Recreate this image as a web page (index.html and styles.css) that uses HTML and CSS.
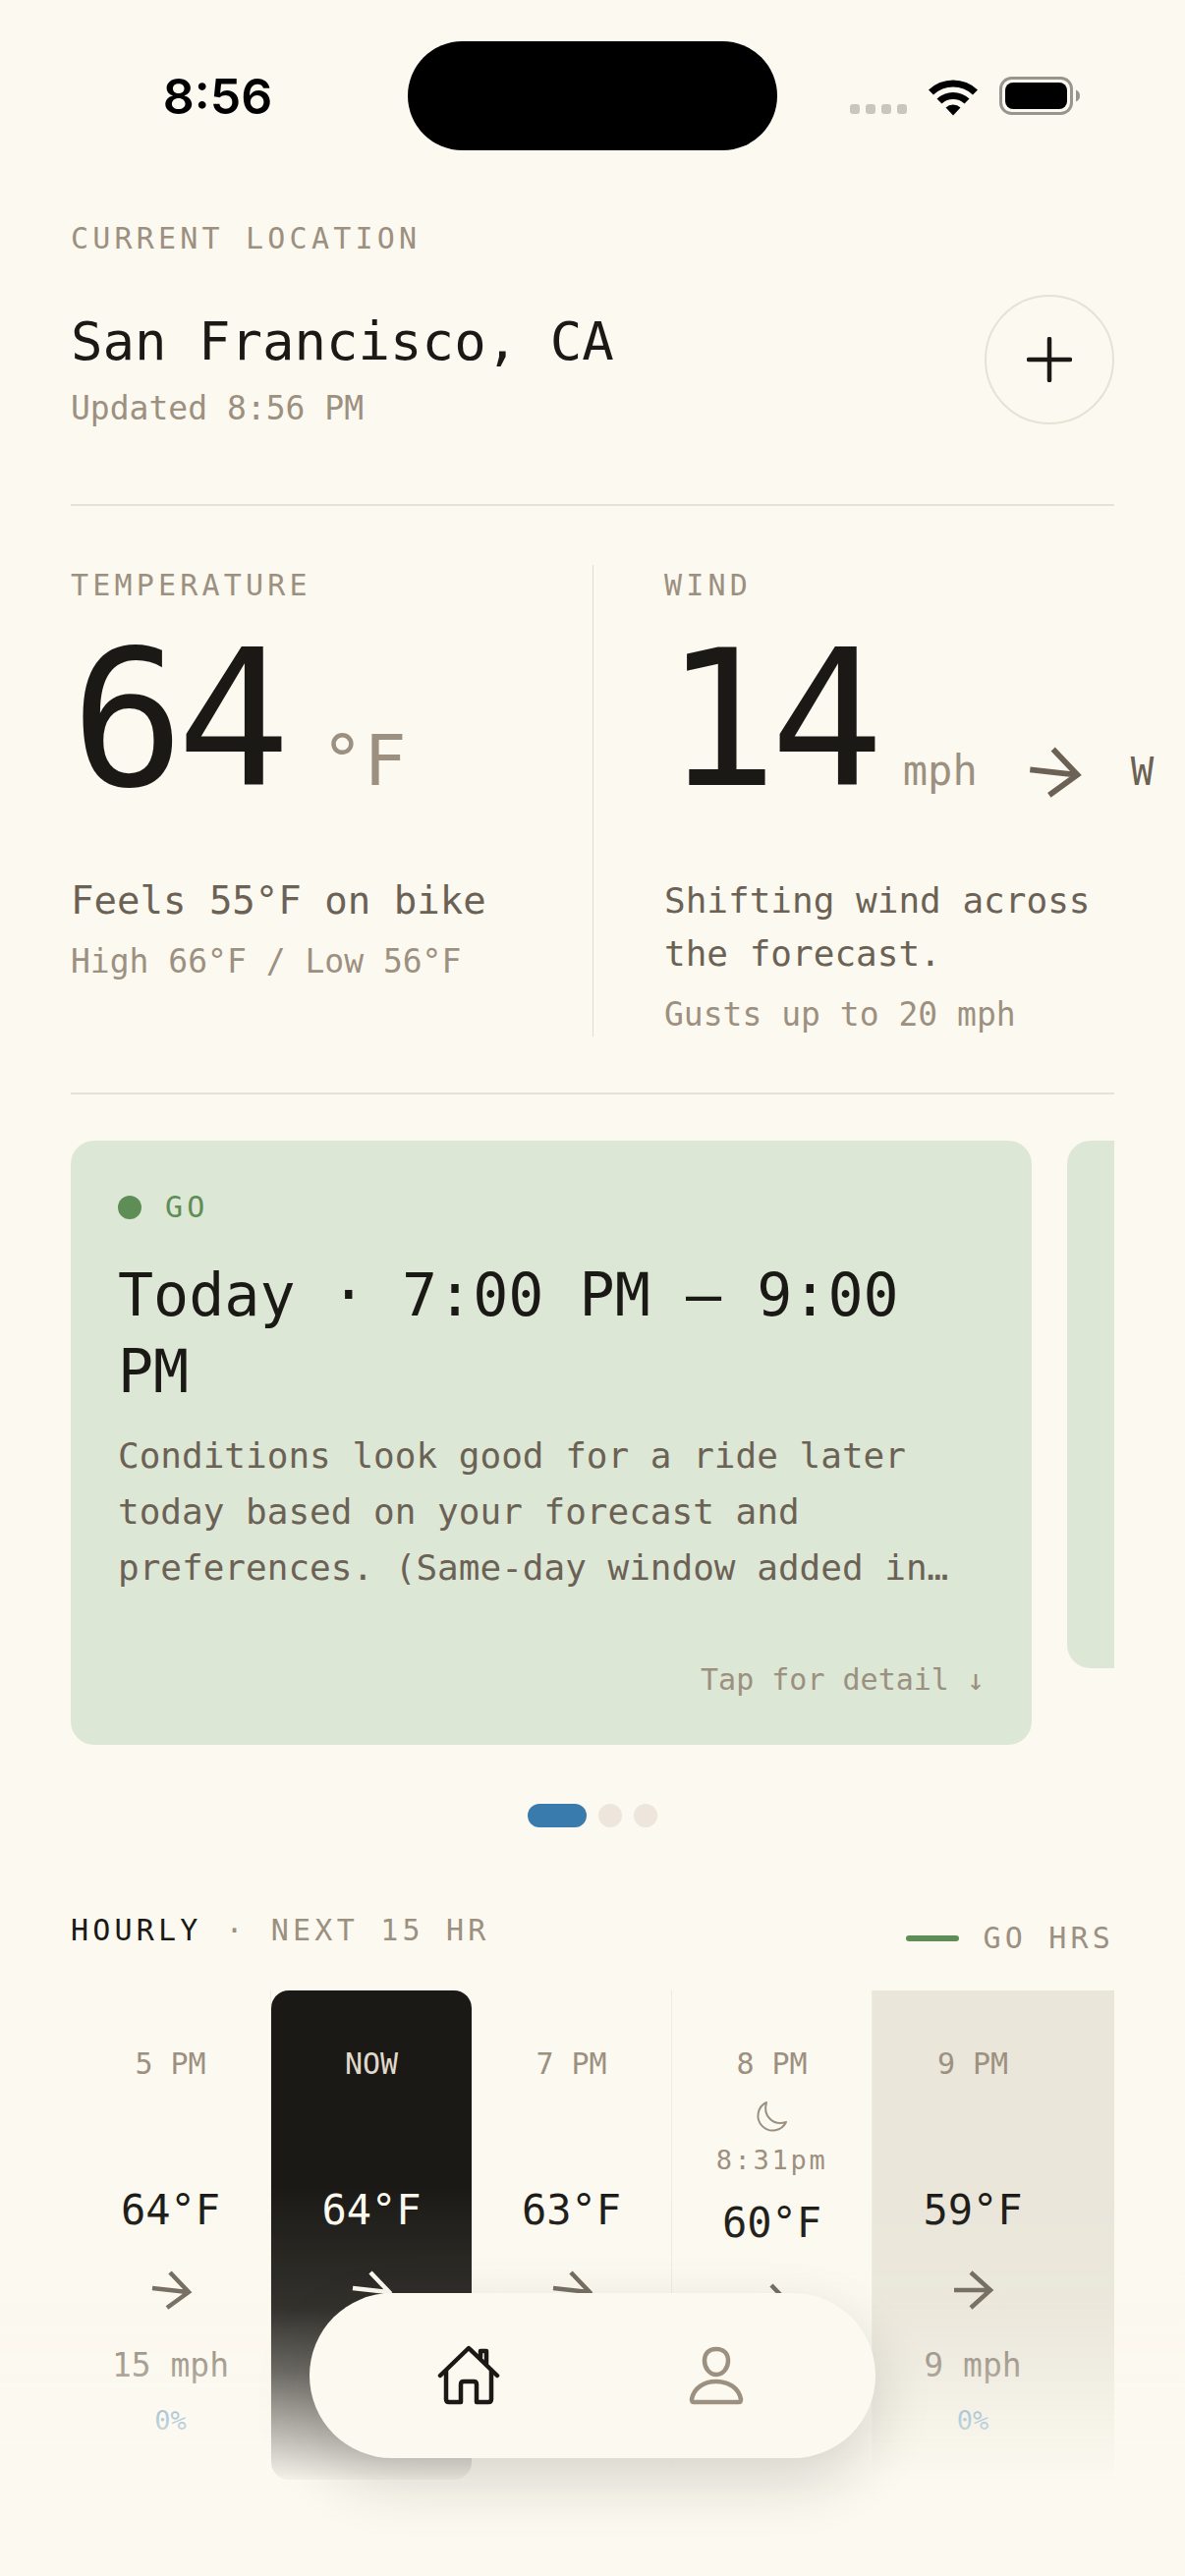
FILE: index.html
```
<!DOCTYPE html>
<html lang="en">

<head>
    <meta charset="UTF-8">
    <meta name="viewport" content="width=device-width, initial-scale=1.0">
    <title>Ride Weather</title>
    <link rel="stylesheet" href="styles.css">
</head>

<body>

    <div class="status-bar">
        <div class="status-time">8:56</div>
        <div class="island"></div>
        <div class="status-icons">
            <svg width="58" height="12" viewBox="0 0 58 12" fill="#c9c6be">
                <rect x="0" y="0" width="10" height="10" rx="3" />
                <rect x="16" y="0" width="10" height="10" rx="3" />
                <rect x="32" y="0" width="10" height="10" rx="3" />
                <rect x="48" y="0" width="10" height="10" rx="3" />
            </svg>
            <svg class="wifi" width="52" height="38" viewBox="0 0 52 38">
                <path d="M1 11.500 A36 36 0 0 1 51 11.500 L46 16.500 A29 29 0 0 0 6 16.500 Z" />
                <path d="M9.500 20.500 A24 24 0 0 1 42.500 20.500 L37.500 25.500 A17 17 0 0 0 14.500 25.500 Z" />
                <path d="M18.500 29.500 A11 11 0 0 1 33.500 29.500 L26 37.500 Z" />
            </svg>
            <svg width="82" height="40" viewBox="0 0 82 40">
                <rect x="1.500" y="1.500" width="72" height="36" rx="11" fill="none" stroke="#98958f" stroke-width="3" />
                <rect x="6" y="6" width="63" height="27" rx="8" />
                <path d="M78 13.500 Q82 15 82 19.500 Q82 24 78 25.500 Z" fill="#98958f" />
            </svg>
        </div>
    </div>

    <main class="page">
        <p class="label">CURRENT LOCATION</p>
        <header class="location">
            <div class="place">
                <h1 class="city">San Francisco, CA</h1>
                <p class="note">Updated 8:56 PM</p>
            </div>
            <button class="add" type="button" aria-label="Add location">
                <svg width="46" height="46" viewBox="0 0 46 46" fill="none" stroke="#1a1915" stroke-width="4.500" stroke-linecap="round">
                    <path d="M23 2 V44 M2 23 H44" />
                </svg>
            </button>
        </header>

        <section class="current">
            <div class="metric">
                <h2 class="label">TEMPERATURE</h2>
                <div class="reading">
                    <span class="value">64</span>
                    <span class="degrees">°F</span>
                </div>
                <p class="feels">Feels 55°F on bike</p>
                <p class="note">High 66°F / Low 56°F</p>
            </div>
            <div class="metric wind">
                <h2 class="label">WIND</h2>
                <div class="reading">
                    <span class="value">14</span>
                    <span class="speed">mph</span>
                    <span class="heading">
                        <svg class="heading-arrow" width="78" height="78" viewBox="0 0 60 60"><use href="#arrow" /></svg>
                        <span class="direction">W</span>
                    </span>
                </div>
                <p class="summary">Shifting wind across the forecast.</p>
                <p class="note">Gusts up to 20 mph</p>
            </div>
        </section>

        <section class="cards">
            <article class="card">
                <p class="label go"><span class="dot"></span>GO</p>
                <h2 class="card-title">Today · 7:00 PM – 9:00 PM</h2>
                <p class="card-text">Conditions look good for a ride later today based on your forecast and preferences. (Same-day window added in…</p>
                <button class="detail" type="button">Tap for detail ↓</button>
            </article>
            <article class="card next"></article>
        </section>

        <div class="pager">
            <span class="page-dot active"></span>
            <span class="page-dot"></span>
            <span class="page-dot"></span>
        </div>

        <div class="hourly-head">
            <h2 class="label hourly-title"><span class="strong">HOURLY</span><span>·</span><span>NEXT 15 HR</span></h2>
            <p class="label legend"><span class="legend-line"></span>GO HRS</p>
        </div>

        <section class="hours">
            <div class="hour">
                <span class="time">5 PM</span>
                <div class="sun"></div>
                <span class="temp">64°F</span>
                <svg class="arrow" width="60" height="60" viewBox="0 0 60 60"><use href="#arrow" /></svg>
                <span class="mph">15 mph</span>
                <span class="rain">0%</span>
            </div>
            <div class="hour now">
                <span class="time">NOW</span>
                <div class="sun"></div>
                <span class="temp">64°F</span>
                <svg class="arrow" width="60" height="60" viewBox="0 0 60 60"><use href="#arrow" /></svg>
            </div>
            <div class="hour">
                <span class="time">7 PM</span>
                <div class="sun"></div>
                <span class="temp">63°F</span>
                <svg class="arrow" width="60" height="60" viewBox="0 0 60 60"><use href="#arrow" /></svg>
            </div>
            <div class="hour">
                <span class="time">8 PM</span>
                <div class="sun">
                    <svg width="36" height="36" viewBox="0 0 36 36" fill="none" stroke="#9c9080" stroke-width="2" stroke-linejoin="round">
                        <path d="M13 3 A15 15 0 1 0 33 23 C20 27 9 17 13 3 Z" />
                    </svg>
                    <span class="sunset">8:31pm</span>
                </div>
                <span class="temp">60°F</span>
                <svg class="arrow" width="60" height="60" viewBox="0 0 60 60"><use href="#arrow" /></svg>
            </div>
            <div class="hour night">
                <span class="time">9 PM</span>
                <div class="sun"></div>
                <span class="temp">59°F</span>
                <svg class="arrow" width="60" height="60" viewBox="0 0 60 60"><use href="#arrow-flat" /></svg>
                <span class="mph">9 mph</span>
                <span class="rain">0%</span>
            </div>
            <div class="hour night"></div>
        </section>
    </main>

    <div class="fade"></div>

    <nav class="tabs">
        <button class="tab" type="button" aria-label="Home">
            <svg width="72" height="72" viewBox="0 0 72 72" fill="none" stroke="#1a1915" stroke-width="4.500" stroke-linecap="round" stroke-linejoin="round">
                <path d="M7 36 L36 8 L65 36" />
                <path d="M13 31 V60 Q13 63 16 63 H28 V45 Q28 42 31 42 H41 Q44 42 44 45 V63 H56 Q59 63 59 60 V31" />
                <path d="M48 17 V11 H54 V24" />
            </svg>
        </button>
        <button class="tab" type="button" aria-label="Profile">
            <svg width="72" height="72" viewBox="0 0 72 72" fill="none" stroke="#9c9080" stroke-width="4.500" stroke-linejoin="round">
                <path d="M36 9 C44 9 48 14 48 21 C48 28 43 35 36 35 C29 35 24 28 24 21 C24 14 28 9 36 9 Z" />
                <path d="M11 60 C13 49 23 42 36 42 C49 42 59 49 61 60 Q61 63 59 63 H13 Q11 63 11 60 Z" />
            </svg>
        </button>
    </nav>

    <svg class="symbols" width="0" height="0">
        <symbol id="arrow" viewBox="0 0 60 60">
            <path d="M11 28 L47 32 M29 12 L48 32 L26 48" fill="none" stroke="currentColor" stroke-width="4.500" />
        </symbol>
        <symbol id="arrow-flat" viewBox="0 0 60 60">
            <path d="M11 30 H48 M28 12 L48 30 L28 48" fill="none" stroke="currentColor" stroke-width="4.500" />
        </symbol>
    </svg>

</body>

</html>
```

FILE: styles.css
```
* {
    box-sizing: border-box;
}

body {
    margin: 0;
    background-color: #fcf9f0;
    color: #1a1915;
    font-family: "DejaVu Sans Mono", "Liberation Mono", monospace;
    overflow: hidden;
}

h1,
h2,
p {
    margin: 0;
    font-weight: 400;
}

button {
    border: none;
    padding: 0;
    background: none;
    font-family: inherit;
    cursor: pointer;
}

.status-bar {
    display: grid;
    grid-template-columns: 1fr 376px 1fr;
    align-items: center;
    padding-top: 42px;
    color: #000;
}

.status-time {
    padding-left: 28px;
    text-align: center;
    font: 600 50px/60px Inter, sans-serif;
}

.island {
    height: 111px;
    border-radius: 56px;
    background-color: #000;
}

.status-icons {
    display: flex;
    align-items: flex-end;
    gap: 21px;
    padding-left: 74px;
}

.page {
    padding: 72px 72px 0;
}

.label {
    color: #9c9080;
    font-size: 30px;
    line-height: 36px;
    letter-spacing: 0.14em;
}

.note {
    color: #9c9080;
    font-size: 33px;
    line-height: 45px;
}

.location {
    display: flex;
    justify-content: space-between;
    align-items: center;
    margin-top: 33px;
    padding-bottom: 75px;
    border-bottom: 2px solid #e6e2d5;
}

.place {
    padding-top: 21px;
}

.city {
    margin-bottom: 12px;
    font-size: 54px;
    line-height: 66px;
}

.add {
    display: flex;
    justify-content: center;
    align-items: center;
    width: 132px;
    height: 132px;
    border: 2px solid #e6e2d5;
    border-radius: 50%;
}

.current {
    display: grid;
    grid-template-columns: minmax(0, 1fr) minmax(0, 1fr);
    padding: 60px 0 57px;
    border-bottom: 2px solid #e6e2d5;
}

.metric {
    padding-top: 3px;
}

.wind {
    padding-left: 72px;
    border-left: 1px solid #e0dccf;
}

.reading {
    display: flex;
    align-items: baseline;
    height: 252px;
    margin-bottom: 24px;
    white-space: nowrap;
}

.value {
    font-size: 192px;
    line-height: 237px;
    letter-spacing: -0.04em;
}

.degrees {
    margin-left: 39px;
    color: #9c9080;
    font-size: 72px;
}

.speed {
    margin-left: 27px;
    color: #9c9080;
    font-size: 42px;
}

.heading {
    display: flex;
    align-items: baseline;
    gap: 39px;
    margin-left: 39px;
    color: #6b6255;
}

.heading-arrow {
    align-self: center;
}

.direction {
    font-size: 39px;
    line-height: 78px;
}

.feels,
.summary {
    margin-bottom: 12px;
    color: #6b6255;
    line-height: 54px;
}

.feels {
    font-size: 39px;
}

.summary {
    font-size: 36px;
}

.cards {
    display: flex;
    align-items: flex-start;
    gap: 36px;
    margin-top: 47px;
    overflow: hidden;
}

.card {
    flex: none;
    width: calc(100% - 84px);
    padding: 48px;
    border-radius: 24px;
    background-color: #dde7d6;
}

.next {
    height: 537px;
}

.go {
    display: flex;
    align-items: center;
    gap: 24px;
    color: #5e8e55;
    line-height: 39px;
}

.dot {
    width: 24px;
    height: 24px;
    border-radius: 50%;
    background-color: #5e8e55;
}

.card-title {
    margin-top: 31px;
    font-size: 60px;
    line-height: 78px;
}

.card-text {
    margin-top: 18px;
    color: #6b6255;
    font-size: 36px;
    line-height: 57px;
}

.detail {
    display: block;
    margin: 68px 0 0 auto;
    color: #9c9080;
    font-size: 30px;
    line-height: 36px;
}

.pager {
    display: flex;
    justify-content: center;
    gap: 12px;
    margin-top: 60px;
}

.page-dot {
    width: 24px;
    height: 24px;
    border-radius: 12px;
    background-color: #eee6dd;
}

.active {
    width: 60px;
    background-color: #3a7bae;
}

.hourly-head {
    display: flex;
    justify-content: space-between;
    margin-top: 87px;
}

.hourly-title,
.legend {
    display: flex;
    gap: 24px;
}

.legend {
    align-items: center;
    padding-top: 8px;
}

.strong {
    color: #1a1915;
}

.legend-line {
    width: 54px;
    height: 6px;
    border-radius: 3px;
    background-color: #5e8e55;
}

.hours {
    display: flex;
    margin-top: 35px;
    overflow: hidden;
}

.hour {
    display: flex;
    flex: none;
    flex-direction: column;
    align-items: center;
    width: 204px;
    height: 498px;
    padding-top: 57px;
    border-right: 1px solid #eeebdf;
}

.time {
    color: #9c9080;
    font-size: 30px;
    line-height: 36px;
}

.sun {
    display: flex;
    flex-direction: column;
    align-items: center;
    min-height: 104px;
    padding-top: 18px;
}

.sunset {
    margin: 6px 0 18px;
    color: #9c9080;
    font-size: 27px;
    line-height: 39px;
    letter-spacing: 0.1em;
}

.temp {
    font-size: 42px;
    line-height: 54px;
}

.arrow {
    margin: 24px 0 26px;
    color: #6b6255;
}

.mph {
    color: #7d7364;
    font-size: 33px;
    line-height: 42px;
}

.rain {
    margin-top: 18px;
    color: #3a7bae;
    font-size: 27px;
    line-height: 33px;
}

.now {
    border: none;
    border-radius: 18px;
    background-color: #1a1915;
    color: #fcf9f0;
}

.now .time {
    color: #e0d8cb;
}

.now .arrow {
    color: #fcf9f0;
}

.night {
    border: none;
    background-color: #eae6da;
}

.fade {
    position: fixed;
    right: 0;
    bottom: 0;
    left: 0;
    height: 402px;
    background: linear-gradient(rgba(252, 249, 240, 0), rgba(252, 249, 240, 0.11) 32%, rgba(252, 249, 240, 0.36) 48%, rgba(252, 249, 240, 0.64) 60%, #fcf9f0 77%);
}

.tabs {
    position: fixed;
    bottom: 120px;
    left: 50%;
    display: flex;
    padding: 0 36px;
    border-radius: 84px;
    background-color: #fcf9f0;
    box-shadow: 0 24px 60px rgba(26, 25, 21, 0.16);
    transform: translateX(-50%);
}

.tab {
    display: flex;
    justify-content: center;
    align-items: center;
    width: 252px;
    height: 168px;
}

.symbols {
    position: absolute;
}
```
